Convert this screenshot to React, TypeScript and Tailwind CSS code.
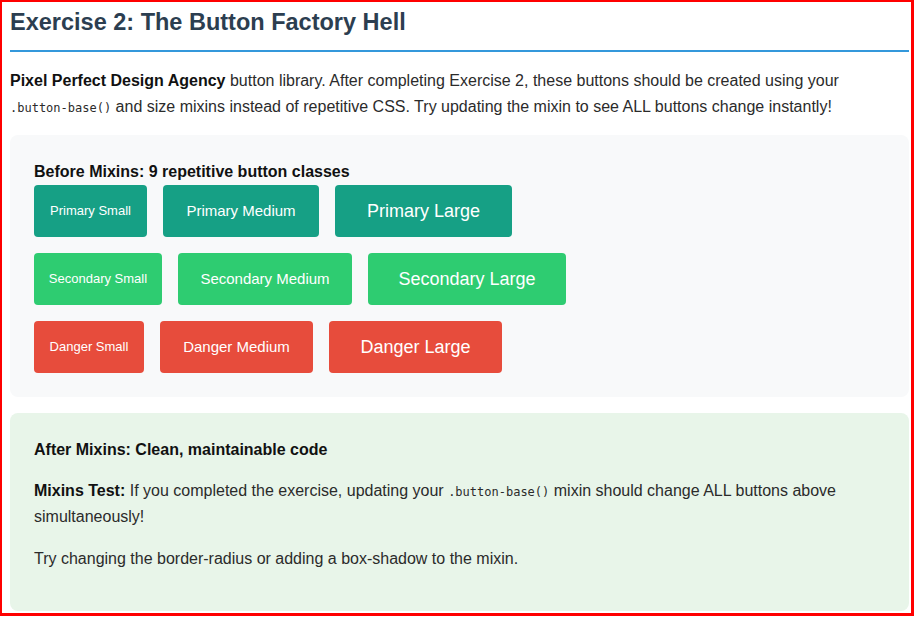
const buttonRows = [
  {
    color: 'bg-[#16a085]',
    items: [
      { label: 'Primary Small', size: 'sm', width: 'w-[113px]' },
      { label: 'Primary Medium', size: 'md', width: 'w-[156px]' },
      { label: 'Primary Large', size: 'lg', width: 'w-[177px]' },
    ],
  },
  {
    color: 'bg-[#2ecc71]',
    items: [
      { label: 'Secondary Small', size: 'sm', width: 'w-[128px]' },
      { label: 'Secondary Medium', size: 'md', width: 'w-[174px]' },
      { label: 'Secondary Large', size: 'lg', width: 'w-[198px]' },
    ],
  },
  {
    color: 'bg-[#e74c3c]',
    items: [
      { label: 'Danger Small', size: 'sm', width: 'w-[110px]' },
      { label: 'Danger Medium', size: 'md', width: 'w-[153px]' },
      { label: 'Danger Large', size: 'lg', width: 'w-[173px]' },
    ],
  },
];

const sizeClass: Record<string, string> = {
  sm: 'text-[13px]',
  md: 'text-[15px]',
  lg: 'text-[18px]',
};

function Code({ children }: { children: string }) {
  return (
    <code className="whitespace-nowrap font-['DejaVu_Sans_Mono',monospace] text-[12px] leading-none">
      {children}
    </code>
  );
}

export default function App() {
  return (
    <div className="w-[914px] h-[616px] overflow-hidden bg-white border-t-2 border-l-2 border-r-[3px] border-b-[3px] border-[#ff0000] pl-[8px] pr-[2px] font-['Liberation_Sans',sans-serif] text-[16px] leading-[1.6] text-[#2b2b2b]">
      {/* Header */}
      <h2 className="mt-[6px] pb-[13px] border-b-2 border-[#3498db] text-[23.5px] leading-[29px] font-bold text-[#2c3e50]">
        Exercise 2: The Button Factory Hell
      </h2>

      <p className="mt-[16px]">
        <strong className="text-[#111]">Pixel Perfect Design Agency</strong> button library. After completing
        Exercise 2, these buttons should be created using your <Code>.button-base()</Code> and size mixins
        instead of repetitive CSS. Try updating the mixin to see ALL buttons change instantly!
      </p>

      {/* Before mixins */}
      <div className="mt-[16px] rounded-lg bg-[#f8f9fa] p-6">
        <div className="font-bold text-[#111]">Before Mixins: 9 repetitive button classes</div>
        <div className="flex flex-col gap-4">
          {buttonRows.map((row, i) => (
            <div key={i} className="flex gap-4 h-[52px]">
              {row.items.map(btn => (
                <button
                  key={btn.label}
                  className={`${row.color} ${btn.width} ${sizeClass[btn.size]} rounded text-white flex items-center justify-center leading-none`}
                >
                  {btn.label}
                </button>
              ))}
            </div>
          ))}
        </div>
      </div>

      {/* After mixins */}
      <div className="mt-[16px] rounded-lg bg-[#e8f5e9] px-6 pt-6 pb-[24px]">
        <div className="font-bold text-[#111]">After Mixins: Clean, maintainable code</div>
        <p className="mt-4">
          <strong className="text-[#111]">Mixins Test:</strong> If you completed the exercise, updating your{' '}
          <Code>.button-base()</Code> mixin should change ALL buttons above simultaneously!
        </p>
        <p className="mt-4 mb-4">Try changing the border-radius or adding a box-shadow to the mixin.</p>
      </div>
    </div>
  );
}
